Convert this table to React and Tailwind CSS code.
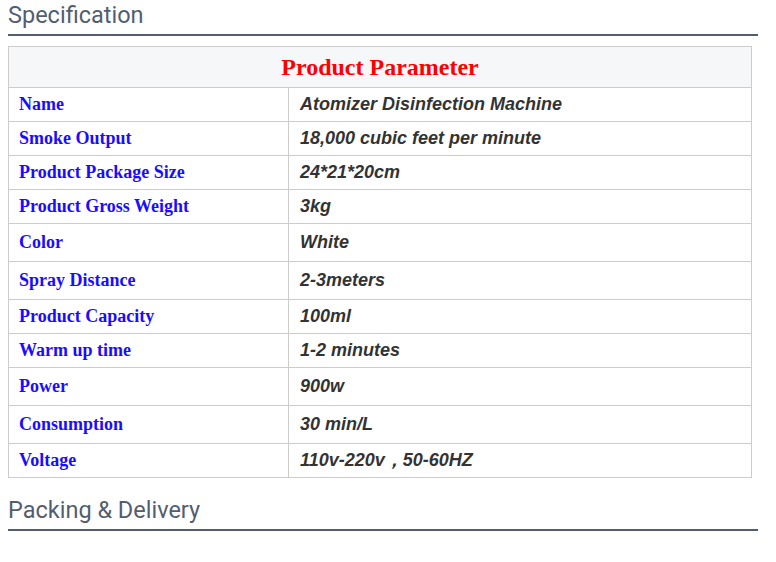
const rows = [
  { name: 'Name', value: 'Atomizer Disinfection Machine', h: 'h-[34px]' },
  { name: 'Smoke Output', value: '18,000 cubic feet per minute', h: 'h-[34px]' },
  { name: 'Product Package Size', value: '24*21*20cm', h: 'h-[34px]' },
  { name: 'Product Gross Weight', value: '3kg', h: 'h-[34px]' },
  { name: 'Color', value: 'White', h: 'h-[38px]' },
  { name: 'Spray Distance', value: '2-3meters', h: 'h-[38px]' },
  { name: 'Product Capacity', value: '100ml', h: 'h-[34px]' },
  { name: 'Warm up time', value: '1-2 minutes', h: 'h-[34px]' },
  { name: 'Power', value: '900w', h: 'h-[38px]' },
  { name: 'Consumption', value: '30 min/L', h: 'h-[38px]' },
  { name: 'Voltage', value: '110v-220v，50-60HZ', h: 'h-[34px]' },
];

function SectionTitle({ children }) {
  return (
    <div className="border-b-2 border-[#535d6f] pb-[4px]">
      <h2 className="font-['Roboto',sans-serif] text-[23.5px] leading-[30px] text-[#535d6f]">{children}</h2>
    </div>
  );
}

export default function App() {
  return (
    <div className="min-h-screen bg-white px-2 pt-0">
      <div className="w-[750px]">
        <SectionTitle>Specification</SectionTitle>

        <table className="mt-[10px] w-[744px] border-collapse">
          <tbody>
            <tr>
              <td
                colSpan={2}
                className="h-[41px] border border-[#cccccc] bg-[#f6f7f9] text-center font-['Liberation_Serif',serif] text-[24px] font-bold text-[#ff0000]"
              >
                Product Parameter
              </td>
            </tr>
            {rows.map((r) => (
              <tr key={r.name} className={r.h}>
                <td className="w-[280px] border border-[#cccccc] px-[10px] font-['Liberation_Serif',serif] text-[18px] font-bold text-[#1a0dff]">
                  {r.name}
                </td>
                <td className="border border-[#cccccc] px-[11px] font-['Liberation_Sans',sans-serif] text-[18px] font-bold italic text-[#333333]">
                  {r.value}
                </td>
              </tr>
            ))}
          </tbody>
        </table>

        <div className="mt-[17px]">
          <SectionTitle>Packing &amp; Delivery</SectionTitle>
        </div>
      </div>
    </div>
  );
}
